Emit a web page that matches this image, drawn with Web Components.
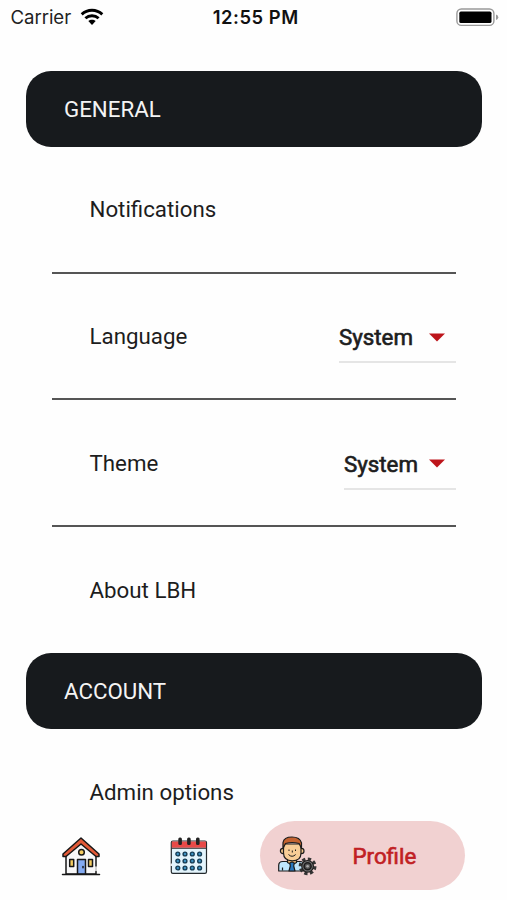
<!DOCTYPE html>
<html lang="en">
<head>
<meta charset="utf-8">
<title>Settings</title>
<style>
html,body{margin:0;height:100%;background:#fefefe}
body{font-family:Roboto,"Liberation Sans",sans-serif;font-size:22.3px;color:#1d1d1d;overflow:hidden}
</style>
</head>
<body>
<settings-screen></settings-screen>
<script>
const define = (name, html) => customElements.define(name, class extends HTMLElement {
  constructor() {
    super();
    const t = document.createElement('template');
    t.innerHTML = html;
    this.attachShadow({mode: 'open'}).append(t.content.cloneNode(true));
  }
});

define('status-bar', `
<style>
:host{display:grid;grid-template-columns:1fr auto 1fr;align-items:center;height:34px;padding:0 8px 0 10.5px;font:18.6px/33px Inter,"Liberation Sans",sans-serif;color:#222;flex:none;box-sizing:border-box}
.left{display:flex;align-items:center;gap:9px}
.carrier{letter-spacing:-.05px}
.time{font-weight:600;font-size:18.4px;color:#111;letter-spacing:.55px;margin-left:2px}
.batt{justify-self:end}
svg{display:block;margin-bottom:1px}
</style>
<div class="left"><span class="carrier">Carrier</span>
<svg width="24" height="18" viewBox="0 0 24 18" fill="none" stroke="#000" stroke-width="2.9"><path d="M1.7 6.4C7.5.9 16.5.9 22.3 6.4M5.4 10.3c3.7-3.4 9.5-3.4 13.2 0"/><path d="M8.3 13.1c2.1-1.9 5.3-1.9 7.4 0L12 16.9z" fill="#000" stroke="none"/></svg></div>
<span class="time">12:55 PM</span>
<svg class="batt" width="43" height="20" viewBox="0 0 43 20"><rect x=".9" y="2" width="37" height="16.4" rx="4.5" fill="#fff" stroke="#999" stroke-width="1.4"/><rect x="3.3" y="4.6" width="32.2" height="11.4" rx="1.6"/><path d="M40 7.4q2.3.6 2.3 2.8T40 13z" fill="#999"/></svg>`);

define('section-header', `
<style>
:host{display:flex;align-items:center;box-sizing:border-box;height:76px;margin:0 25.5px 0 26px;padding:0 38.5px 0 38px;border-radius:25px;background:#171a1d;color:#f4f4f4}
</style><slot></slot>`);

define('setting-row', `
<style>
:host{display:flex;box-sizing:border-box;height:126.7px;margin:0 51px 0 51.5px;padding:3px 0 0 38px;align-items:center;justify-content:space-between;border-bottom:2px solid #555}
:host([last]){border-bottom-color:transparent}
span{padding-bottom:2.6px}
</style><span><slot></slot></span><slot name="control"></slot>`);

define('select-field', `
<style>
:host{display:flex;align-items:center;box-sizing:border-box;width:117px;height:51px;border-bottom:2px solid #e5e5e5;justify-content:space-between;padding:1px 11px 0 0;-webkit-text-stroke:.65px currentColor}
:host([narrow]){width:112px}
svg{display:block}
</style><slot></slot><svg width="16" height="9" viewBox="0 0 16 9"><path d="M0 .5h16L8 8.5z" fill="#bd151b"/></svg>`);

define('house-icon', `
<style>:host,svg{display:block}</style>
<svg width="40" height="40" viewBox="0 0 40 40" stroke="#171717" stroke-width="1.5" stroke-linejoin="round" stroke-linecap="round">
<path d="M5 17 20 4l15 13v21H5z" fill="#f7f7f8"/>
<path d="M20 2 2 18v2.5h3L20 8l15 12.5h3V18z" fill="#e25a38"/>
<circle cx="20.5" cy="16.3" r="2.8" fill="#f4cc60"/>
<path d="M8.7 23.5h4v7h-4zM27.5 23.5h4v7h-4z" fill="#f4cc60"/>
<path d="M16.5 23.5h8V38h-8z" fill="#83aaf2"/><path d="M22 30.5v1.2" fill="none"/>
<path d="M1.5 38.5h37" fill="none"/><path d="M35 31v3.5" stroke="#fff"/>
</svg>`);

define('calendar-icon', `
<style>:host,svg{display:block}</style>
<svg width="40" height="40" viewBox="0 0 40 40">
<rect x="2.3" y="5" width="35.2" height="32.4" rx="1.6" fill="#e3f4fc" stroke="#242a2e" stroke-width="1.2"/>
<path d="M2.8 5.6h34.2v6.2H2.8z" fill="#e84a48"/><path d="M2.3 12.3h35.2" stroke="#343434"/>
<g fill="#222"><rect x="9.3" y="1.5" width="3.6" height="7.5" rx="1.5"/><rect x="18.1" y="1.5" width="3.6" height="7.5" rx="1.5"/><rect x="27" y="1.5" width="3.6" height="7.5" rx="1.5"/></g>
<g fill="#3d92c2" stroke="#163d55" stroke-width="1.4">
<circle cx="8.8" cy="18" r="1.9"/><circle cx="16" cy="18" r="1.9"/><circle cx="23.3" cy="18" r="1.9"/><circle cx="30.6" cy="18" r="1.9"/>
<circle cx="8.8" cy="25" r="1.9"/><circle cx="16" cy="25" r="1.9"/><circle cx="23.3" cy="25" r="1.9"/><circle cx="30.6" cy="25" r="1.9"/>
<circle cx="8.8" cy="32" r="1.9"/><circle cx="16" cy="32" r="1.9"/><circle cx="23.3" cy="32" r="1.9"/><circle cx="30.6" cy="32" r="1.9"/></g>
<path d="M2.2 27.5v2.5" stroke="#fff" stroke-width="1.4"/>
</svg>`);

define('profile-icon', `
<style>:host,svg{display:block}</style>
<svg width="40" height="40" viewBox="0 0 40 40" stroke="#1c1c1c" stroke-width="1.2" stroke-linejoin="round">
<path d="M1.7 35v-5.5q0-4 4-4H23q4 0 4 4V35z" fill="#bfe6fc"/><path d="M5.5 34.5v-3" fill="none"/>
<path d="M10.5 22h9v4.5L15 29l-4.5-2.5z" fill="#e8b577"/>
<path d="m12.8 27 2.2-1 2.2 1-.5 3 1.3 5h-6l1.3-5z" fill="#2877bd"/>
<circle cx="6" cy="15" r="2.6" fill="#f3c58c"/><circle cx="24.4" cy="15" r="2.6" fill="#f3c58c"/>
<path d="M6.5 8H24v9q0 7.8-8.7 7.8T6.5 17z" fill="#f8cd96"/>
<path d="M6 12.5v-6Q7 1 15 1t9.5 6v5.5l-2.4-5Q15 5.5 8.5 7.5z" fill="#c46330"/>
<path d="M11.5 18.5q3.6 3.6 7.2 0M12 13.5V15M18.5 13.5V15M15.3 14.5v2" fill="none" stroke-width="1"/>
<g transform="translate(30.6 30.3)"><circle r="7.4" fill="none" stroke="#333" stroke-width="3" stroke-dasharray="3.3 2.511"/><circle r="5.8" fill="#777"/><circle r="3.5" fill="#555" stroke-width="1.6"/><circle r="1.3" fill="#aaa" stroke="none"/></g>
</svg>`);

define('nav-item', `
<style>
:host{display:flex;align-items:center;height:69px;color:#c11f24}
:host([active]){box-sizing:border-box;width:205.5px;padding-left:17px;gap:36px;border-radius:35px;background:#f1d1d1;-webkit-text-stroke:.65px currentColor}
</style><slot name="icon"></slot><slot></slot>`);

define('bottom-nav', `
<style>:host{display:flex;flex:none;align-items:flex-start;box-sizing:border-box;height:79px;padding:0 0 0 61px}
slot{display:flex;width:100%}
::slotted(:nth-child(1)){margin-right:68px}::slotted(:nth-child(2)){margin-right:50.5px}
</style><slot></slot>`);

define('settings-screen', `
<style>
:host{display:flex;flex-direction:column;height:100vh;background:#fefefe}
main{flex:1;min-height:0;overflow:hidden;padding-top:36.5px}
section-header+setting-row{height:127.2px}
section-header~section-header{margin-top:-.5px}
</style>
<status-bar></status-bar>
<main>
<section-header>GENERAL</section-header>
<setting-row>Notifications</setting-row>
<setting-row>Language<select-field slot="control">System</select-field></setting-row>
<setting-row>Theme<select-field slot="control" narrow>System</select-field></setting-row>
<setting-row last>About LBH</setting-row>
<section-header>ACCOUNT</section-header>
<setting-row last>Admin options</setting-row>
</main>
<bottom-nav>
<nav-item aria-label="Home"><house-icon slot="icon"></house-icon></nav-item>
<nav-item aria-label="Calendar"><calendar-icon slot="icon"></calendar-icon></nav-item>
<nav-item active><profile-icon slot="icon"></profile-icon>Profile</nav-item>
</bottom-nav>`);
</script>
</body>
</html>
